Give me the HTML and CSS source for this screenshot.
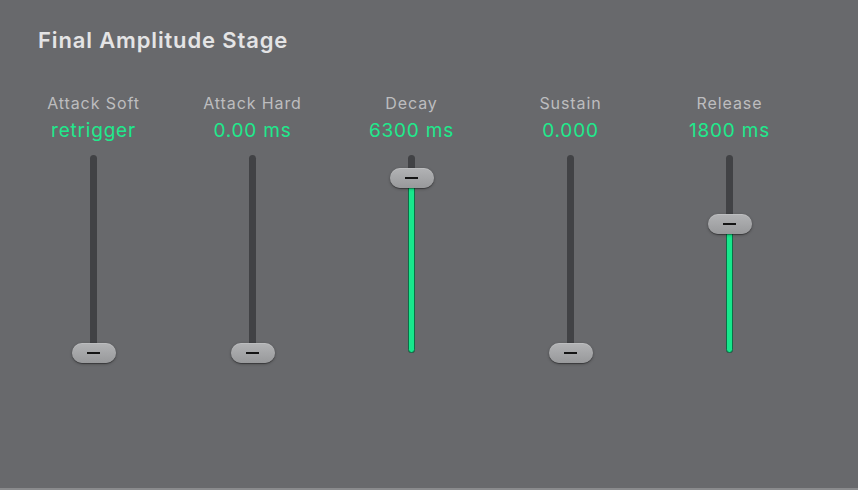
FILE: index.html
```html
<!DOCTYPE html>
<html>
<head>
<meta charset="utf-8">
<link rel="stylesheet" href="styles.css">
</head>
<body>
<div class="panel">
  <h1 class="title">Final Amplitude Stage</h1>
  <div class="sliders">
    <div class="col">
      <div class="label">Attack Soft</div>
      <div class="value">retrigger</div>
      <div class="slider"><div class="track"></div><div class="thumb" style="top:198px"><span></span></div></div>
    </div>
    <div class="col">
      <div class="label">Attack Hard</div>
      <div class="value">0.00 ms</div>
      <div class="slider"><div class="track"></div><div class="thumb" style="top:198px"><span></span></div></div>
    </div>
    <div class="col">
      <div class="label">Decay</div>
      <div class="value">6300 ms</div>
      <div class="slider"><div class="track"><div class="fill" style="height:175px"></div></div><div class="thumb" style="top:23px"><span></span></div></div>
    </div>
    <div class="col">
      <div class="label">Sustain</div>
      <div class="value">0.000</div>
      <div class="slider"><div class="track"></div><div class="thumb" style="top:198px"><span></span></div></div>
    </div>
    <div class="col">
      <div class="label">Release</div>
      <div class="value">1800 ms</div>
      <div class="slider"><div class="track"><div class="fill" style="height:129px"></div></div><div class="thumb" style="top:69px"><span></span></div></div>
    </div>
  </div>
</div>
</body>
</html>
```

FILE: styles.css
```css
html, body {
  margin: 0;
  padding: 0;
  background: #68696c;
}
.panel {
  width: 858px;
  height: 488px;
  border-bottom: 2px solid #8a8b8d;
  box-sizing: content-box;
  font-family: Inter, "Liberation Sans", sans-serif;
}
.title {
  margin: 0;
  padding: 26px 0 0 38px;
  font-size: 22px;
  line-height: 28px;
  font-weight: 600;
  color: #e4e4e5;
  letter-spacing: 0.85px;
}
.sliders {
  display: grid;
  grid-template-columns: repeat(5, 159px);
  padding: 39px 0 0 14px;
}
.col {
  display: flex;
  flex-direction: column;
  align-items: center;
}
.label {
  font-size: 16px;
  line-height: 20px;
  color: #bdbdbf;
  letter-spacing: 0.9px;
}
.value {
  margin-top: 7px;
  font-size: 19px;
  line-height: 22px;
  color: #1fe98c;
  letter-spacing: 0.8px;
}
.slider {
  position: relative;
  width: 46px;
  height: 210px;
  margin-top: 13px;
}
.track {
  position: absolute;
  left: 19px;
  top: 0;
  width: 7px;
  height: 198px;
  border-radius: 3.5px;
  background: #414245;
}
.fill {
  position: absolute;
  left: 0;
  bottom: 0;
  width: 5px;
  border: 1px solid #0d6e45;
  border-radius: 3.5px;
  background: #17e78c;
}
.thumb {
  position: absolute;
  left: 1px;
  width: 44px;
  height: 20px;
  margin-top: -10px;
  border-radius: 10px;
  background: linear-gradient(#b2b3b5, #98999b);
  box-shadow: 0 1px 0 rgba(0,0,0,0.25), 0 1px 3px rgba(0,0,0,0.35), inset 0 1px 0 rgba(255,255,255,0.15);
  display: flex;
  align-items: center;
  justify-content: center;
}
.thumb span {
  display: block;
  width: 13px;
  height: 2px;
  background: #141414;
}
```
